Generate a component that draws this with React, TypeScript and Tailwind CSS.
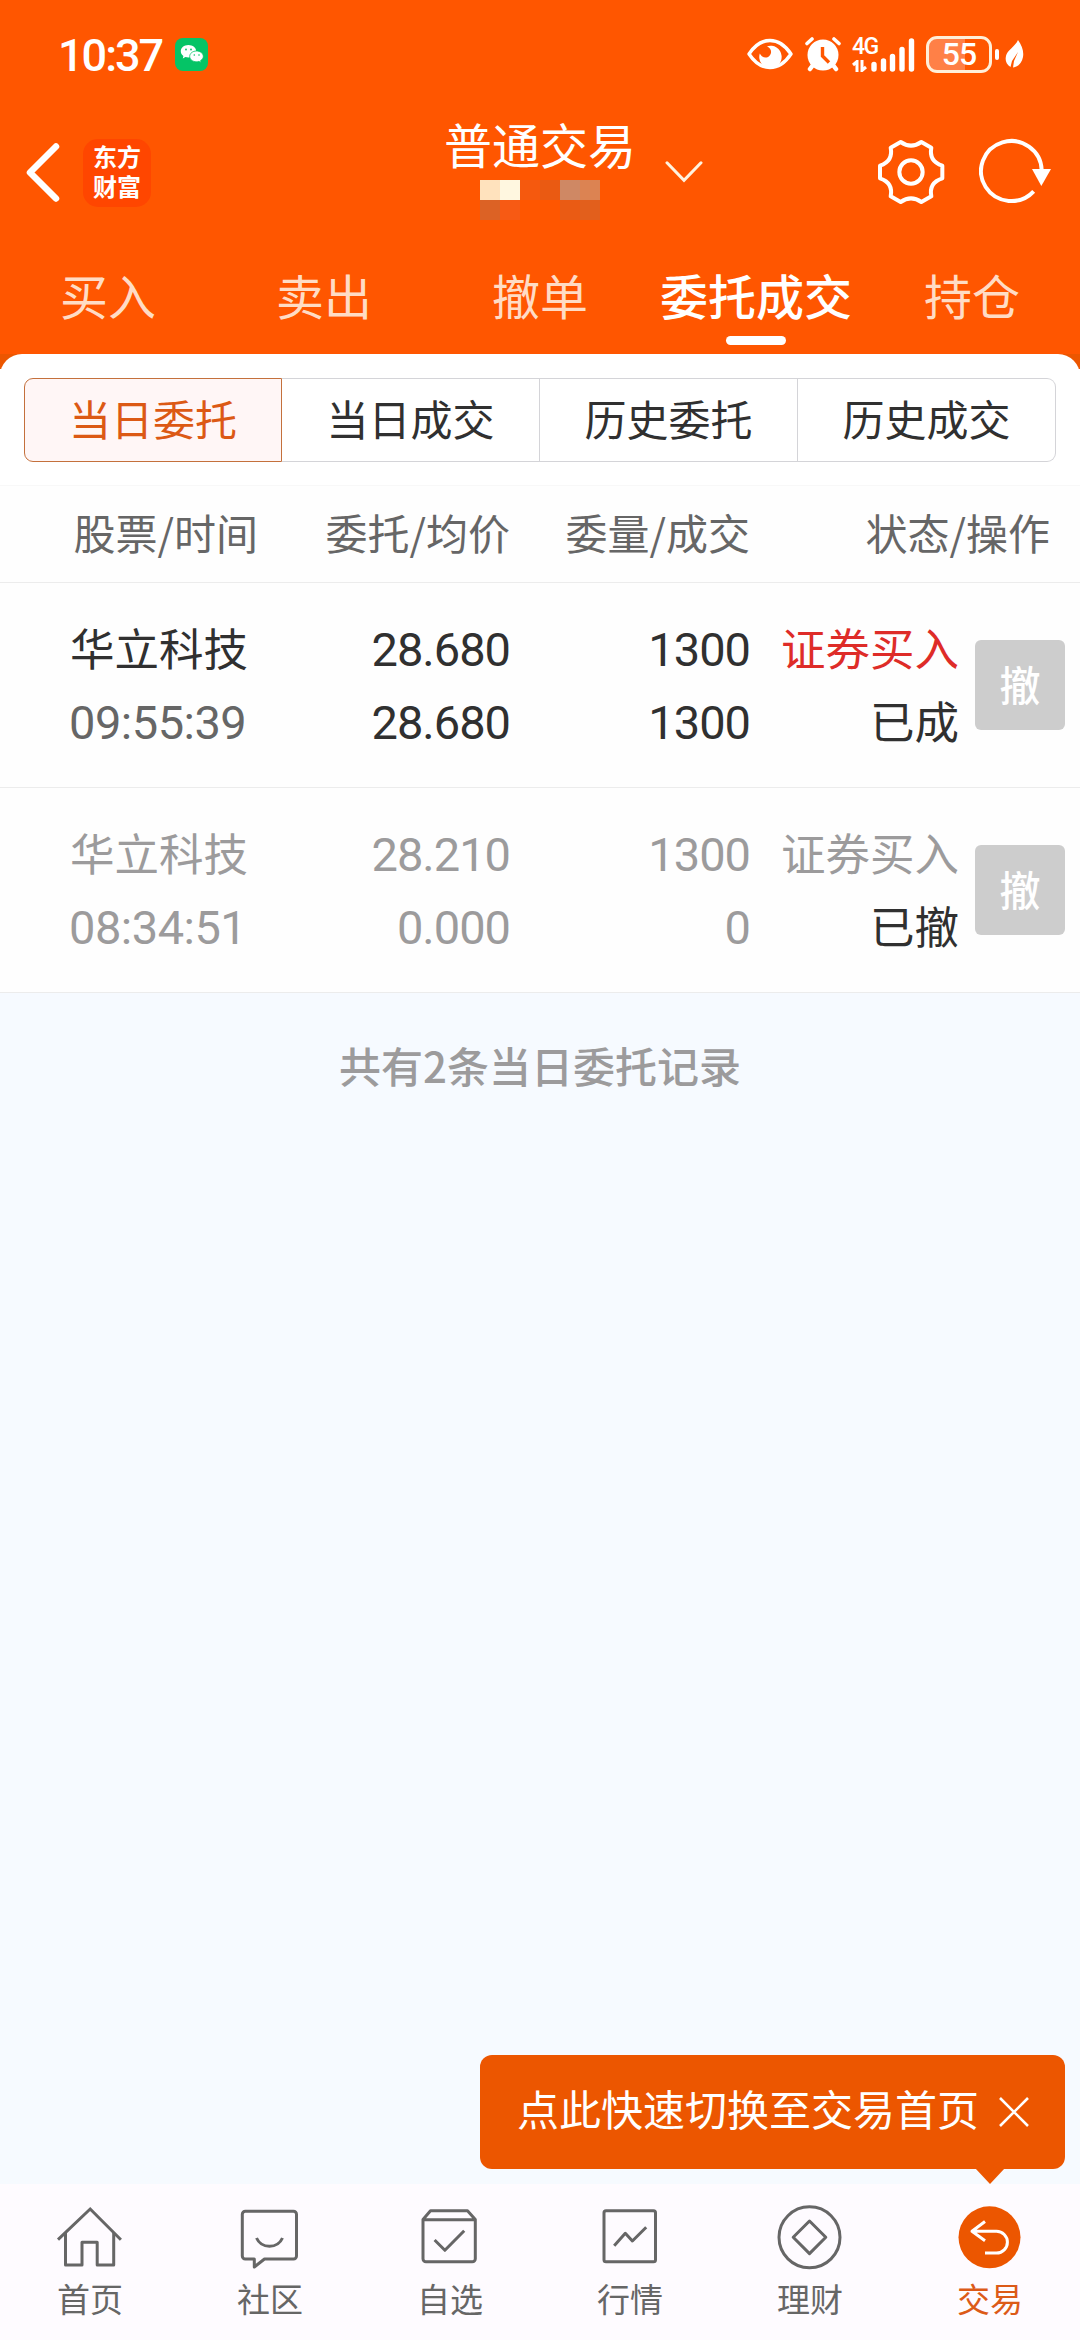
import type { ReactNode } from "react";

const NUM = "font-['Roboto','Noto_Sans_CJK_SC',sans-serif]";

const TABS = ["买入", "卖出", "撤单", "委托成交", "持仓"];
const ACTIVE_TAB = "委托成交";

const SEGMENTS = ["当日委托", "当日成交", "历史委托", "历史成交"];

type Order = {
  name: string;
  time: string;
  price: string;
  avg: string;
  qty: string;
  filled: string;
  side: string;
  status: string;
  canceled?: boolean;
};

const ORDERS: Order[] = [
  {
    name: "华立科技",
    time: "09:55:39",
    price: "28.680",
    avg: "28.680",
    qty: "1300",
    filled: "1300",
    side: "证券买入",
    status: "已成",
  },
  {
    name: "华立科技",
    time: "08:34:51",
    price: "28.210",
    avg: "0.000",
    qty: "1300",
    filled: "0",
    side: "证券买入",
    status: "已撤",
    canceled: true,
  },
];

// masked account number, one colour per block
const MASK = [
  "bg-[#ffe2bd]",
  "bg-[#fff7e0]",
  "bg-[#f5590e]",
  "bg-[#ea5a12]",
  "bg-[#cf8864]",
  "bg-[#dc8352]",
  "bg-[#dc6225]",
  "bg-[#f75a14]",
  "bg-transparent",
  "bg-transparent",
  "bg-[#ea5b14]",
  "bg-[#e25f1c]",
];

function StatusBar() {
  return (
    <div className="flex h-[108px] items-center pl-[58px] pr-[56px] text-white">
      <span className={`${NUM} w-[106px] whitespace-nowrap pt-[2px] text-[45px] leading-none font-medium tracking-[-2px]`}>
        10:37
      </span>
      <span className="ml-[11px] flex h-[33px] w-[33px] items-center justify-center rounded-lg bg-[#05c466]">
        <svg width="24" height="20" viewBox="0 0 24 20">
          <path d="M8.4 1C4 1 .8 3.800.8 7.300c0 2 1 3.700 2.600 4.800l-.6 2.300 2.600-1.300c1 .3 2 .4 3 .4 4.400 0 7.800-2.700 7.800-6.200S12.800 1 8.400 1z" fill="#fff" />
          <path d="M16.500 7c-3.800 0-6.800 2.400-6.800 5.400s3 5.400 6.800 5.400c.8 0 1.700-.1 2.400-.4l2.200 1.200-.5-2c1.600-1 2.700-2.500 2.700-4.200 0-3-3-5.400-6.800-5.400z" fill="#fff" stroke="#05c466" strokeWidth="0.800" />
          <g fill="#05c466">
            <circle cx="6" cy="5.500" r="0.900" />
            <circle cx="11" cy="5.500" r="0.900" />
            <circle cx="14.300" cy="11" r="0.800" />
            <circle cx="19" cy="11" r="0.800" />
          </g>
        </svg>
      </span>

      <div className="ml-auto flex items-center">
        {/* eye comfort */}
        <svg width="46" height="32" viewBox="0 0 46 32" fill="none">
          <path d="M2 16C8 7 15 2.500 23 2.500S38 7 44 16C38 25 31 29.500 23 29.500S8 25 2 16z" stroke="#fff" strokeWidth="3.400" strokeLinejoin="round" />
          <path d="M20 8.300a11.200 11.200 0 1 1-7.200 7.200c2 4 6.500 5.500 9.500 2.500s2.200-7.500-2.300-9.700z" fill="#fff" />
        </svg>
        {/* alarm */}
        <svg className="ml-[12px]" width="36" height="36" viewBox="0 0 36 36" fill="none" stroke="#fff" strokeLinecap="round">
          <circle cx="18" cy="19" r="15.500" fill="#fff" stroke="none" />
          <path d="M2 7.500L7 3M34 7.500L29 3" strokeWidth="3.600" />
          <path d="M8 29l-3 4M28 29l3 4" strokeWidth="4.500" />
          <path d="M17.500 11v9l6.500 6.500" stroke="#ff5600" strokeWidth="3.400" strokeLinecap="butt" />
        </svg>
        {/* mobile signal */}
        <div className="ml-[11px] flex h-[36px] items-end">
          <div className="flex h-[36px] w-[17px] flex-col justify-between pt-px">
            <span className={`${NUM} whitespace-nowrap text-[23px] leading-[20px] font-medium tracking-[-1.500px]`}>4G</span>
            <svg width="15" height="12" viewBox="0 0 15 12" fill="none" stroke="#fff" strokeWidth="3">
              <path d="M1 5l4-3.500V12M14 7l-4 3.500V0" />
            </svg>
          </div>
          <svg className="ml-[2px]" width="44" height="35" viewBox="0 0 44 35" fill="none" stroke="#fff" strokeWidth="5.400" strokeLinecap="round">
            <path d="M3 27.500v4.500M12.500 24v8M21.500 19.500v12.500M31 12.500v19.500M40.500 4v28" />
          </svg>
        </div>
        {/* battery */}
        <div className="ml-[11px] flex h-[37px] w-[66px] items-center justify-center rounded-[11px] border-[3px] border-[#ffefd9] bg-linear-to-r from-[#ff8047] from-60% to-transparent to-60%">
          <span className={`${NUM} text-[32px] leading-none font-medium tracking-[-1px]`}>55</span>
        </div>
        <span className="ml-[3px] h-[11px] w-[4px] rounded-sm bg-white" />
        <svg className="ml-[6px]" width="19" height="29" viewBox="0 0 19 29">
          <path d="M13 0c4 6 6 11 5 17-1 6-5 10-10 10.500l1-6.500 4-9-6 9-1.500 6C1 24 0 20 1 16 2 10 10 7 13 0z" fill="#fff" />
        </svg>
      </div>
    </div>
  );
}

function TitleBar() {
  return (
    <div className="flex h-[130px] items-center text-white">
      <svg className="ml-[24px] shrink-0" width="38" height="60" viewBox="0 0 38 60" fill="none" stroke="#fff" strokeWidth="6.500" strokeLinecap="round" strokeLinejoin="round">
        <path d="M32 3.500L6 29.500l26 26" />
      </svg>
      <div className="ml-[21px] flex h-[68px] w-[68px] shrink-0 items-center justify-center rounded-[15px] bg-[#ff4600] pb-[5px]">
        <span className="w-[50px] pl-px text-[24px] leading-[30px] font-bold break-all">东方财富</span>
      </div>

      <div className="ml-[293px] flex h-full w-[192px] shrink-0 flex-col items-center pt-[7px]">
        <span className="h-[65px] text-[48px] leading-[56px] whitespace-nowrap">普通交易</span>
        <div className="grid w-[120px] grid-cols-6">
          {MASK.map((color, i) => (
            <span key={i} className={`h-5 w-5 ${color}`} />
          ))}
        </div>
      </div>
      <svg className="mb-[3px] ml-[29px] shrink-0" width="38" height="22" viewBox="0 0 38 22" fill="none" stroke="#fff3df" strokeWidth="3" strokeLinecap="round">
        <path d="M2 1.800l17 17.500 17-17.500" />
      </svg>

      {/* settings */}
      <svg className="mb-[2px] ml-[174px] shrink-0" width="68" height="68" viewBox="469 414 204 204" fill="none" stroke="#fff" strokeWidth="12" strokeLinejoin="round">
        <path d="M540 426Q571 448 602 426L632 443Q624 484 665 497V535Q624 548 632 589L602 606Q571 584 540 606L510 589Q518 548 478 535V497Q518 484 510 443Z" />
        <circle cx="571" cy="516" r="35" />
      </svg>
      {/* refresh */}
      <svg className="mb-[2px] ml-[34px] shrink-0" width="74" height="68" viewBox="774 414 222 204" fill="none" stroke="#fff" strokeWidth="12">
        <path d="M962 510A91 90 0 1 0 938 574" />
        <path d="M933 507h57l-29 51z" fill="#fff" stroke="none" />
      </svg>
    </div>
  );
}

function Tabs() {
  return (
    <div className="grid h-[116px] grid-cols-5">
      {TABS.map((tab) => (
        <div key={tab} className="flex flex-col items-center pt-[24px]">
          <span
            className={`text-[48px] leading-[64px] whitespace-nowrap ${
              tab === ACTIVE_TAB ? "font-medium text-white" : "text-[#ffdcc5]"
            }`}
          >
            {tab}
          </span>
          {tab === ACTIVE_TAB && <span className="mt-[10px] h-[9px] w-[60px] rounded-full bg-white" />}
        </div>
      ))}
    </div>
  );
}

function Segments() {
  return (
    <div className="grid h-[84px] grid-cols-4 text-[42px] leading-none text-[#303030]">
      {SEGMENTS.map((label, i) => (
        <div
          key={label}
          className={`flex items-center justify-center pb-[4px] ${
            i === 0
              ? "rounded-l-[9px] border border-[#c4703c] bg-[#fff6f6] text-[#dc5914]"
              : "border-y border-r border-[#d4d4d8]"
          } ${i === SEGMENTS.length - 1 ? "rounded-r-[9px]" : ""}`}
        >
          {label}
        </div>
      ))}
    </div>
  );
}

function OrderRow({ order }: { order: Order }) {
  const tone = order.canceled ? "text-[#9c9b9c]" : "text-[#303030]";
  const line = "h-[73px] leading-[73px]";
  const digits = `${NUM} text-[47px]`;
  return (
    <div className="flex h-[205px] items-start border-b border-[#ececec] bg-[#fefefe] pt-[27px] whitespace-nowrap">
      <div className={`w-[210px] pl-[69px] text-[44.500px] ${tone}`}>
        <div className={`${line} pl-px`}>{order.name}</div>
        <div className={`${line} ${digits} pt-[3px] tracking-[-0.500px] ${order.canceled ? "" : "text-[#666]"}`}>
          {order.time}
        </div>
      </div>
      <div className={`w-[300px] pt-[3px] text-right tracking-[-1px] ${digits} ${tone}`}>
        <div className={line}>{order.price}</div>
        <div className={line}>{order.avg}</div>
      </div>
      <div className={`w-[240px] pt-[3px] text-right tracking-[-1px] ${digits} ${tone}`}>
        <div className={line}>{order.qty}</div>
        <div className={line}>{order.filled}</div>
      </div>
      <div className="w-[209px] text-right text-[44.500px] text-[#303030]">
        <div className={`${line} ${order.canceled ? "text-[#9c9b9c]" : "text-[#de2c28]"}`}>{order.side}</div>
        <div className={line}>{order.status}</div>
      </div>
      <button className="mt-[30px] ml-[16px] h-[90px] w-[90px] rounded-md bg-[#cdcdcd] pb-[4px] text-[41px] leading-none font-medium text-white">
        撤
      </button>
    </div>
  );
}

function NavIcon({ children }: { children: ReactNode }) {
  return (
    <svg width="72" height="66" viewBox="0 0 72 66" fill="none" stroke="#666" strokeWidth="3" strokeLinejoin="round">
      {children}
    </svg>
  );
}

const NAV = [
  {
    label: "首页",
    icon: (
      <>
        <path d="M4 35.700L36.200 5l30.700 30.700" strokeLinejoin="miter" />
        <path d="M11.500 29v32H28V38.300h15.200V61h16.500V29" />
      </>
    ),
  },
  {
    label: "社区",
    icon: (
      <>
        <path d="M11.500 7.300h48a3 3 0 0 1 3 3V52a3 3 0 0 1-3 3h-29l-10.200 8v-8h-9a3 3 0 0 1-3-3V10.300a3 3 0 0 1 3-3z" />
        <path d="M22.500 34c5 11 21 11 26 0" />
      </>
    ),
  },
  {
    label: "自选",
    icon: (
      <>
        <path d="M9 15.500l7.500-8.800h37l7.800 8.800v39.300a3 3 0 0 1-3 3H12a3 3 0 0 1-3-3zM9 15.700h52" />
        <path d="M20.600 36l10.300 10.300 19.300-19.600" />
      </>
    ),
  },
  {
    label: "行情",
    icon: (
      <>
        <rect x="10" y="6.700" width="51.500" height="51" rx="2" />
        <path d="M20.200 41.700l11.100-12.400 7.100 7.700 13.800-13.700" />
      </>
    ),
  },
  {
    label: "理财",
    icon: (
      <>
        <circle cx="35.500" cy="33.300" r="30.500" />
        <path d="M35.500 17l16.300 16.300-16.300 16.300-16.300-16.300z" />
      </>
    ),
  },
  {
    label: "交易",
    active: true,
    icon: (
      <>
        <circle cx="35.500" cy="33.300" r="31" fill="#ec5600" stroke="none" />
        <path d="M31 17.500L18 27.300l13 9.500M18 27.300h24.500a10.900 10.900 0 0 1 0 21.800H31" stroke="#fff" />
      </>
    ),
  },
];

function BottomNav() {
  return (
    <nav className="relative grid h-[156px] grid-cols-6 bg-[#fefbff]">
      {NAV.map((item) => (
        <div key={item.label} className="flex flex-col items-center pt-[20px]">
          <NavIcon>{item.icon}</NavIcon>
          <span
            className={`mt-[8px] text-[33px] leading-[40px] ${item.active ? "text-[#dc5a18]" : "text-[#666]"}`}
          >
            {item.label}
          </span>
        </div>
      ))}

      {/* hint over the last tab */}
      <div className="absolute right-[15px] bottom-[171px] flex h-[114px] w-[585px] items-center rounded-xl bg-[#ec5600] pl-[37px] text-white">
        <span className="pb-[9px] text-[42px] leading-none whitespace-nowrap">点此快速切换至交易首页</span>
        <svg className="ml-[20px]" width="30" height="30" viewBox="0 0 30 30" stroke="#fff" strokeWidth="2.600">
          <path d="M1 1l28 28M29 1L1 29" />
        </svg>
        <svg className="absolute top-[113px] right-[60px]" width="30" height="16" viewBox="0 0 30 16">
          <path d="M0 0h30L15 16z" fill="#ec5600" />
        </svg>
      </div>
    </nav>
  );
}

export default function App() {
  return (
    <div className="flex h-[2340px] w-[1080px] flex-col overflow-hidden bg-[#f6faff] font-['Noto_Sans_CJK_SC',sans-serif]">
      <header className="bg-[#ff5600]">
        <StatusBar />
        <TitleBar />
        <Tabs />
      </header>

      <main className="flex-1">
        <div className="bg-linear-to-b from-[#ec5600] from-[15px] to-white to-[15px]">
          <div className="h-[132px] rounded-t-[22px] border-b border-[#f8f8f8] bg-white px-[24px] pt-[24px]">
            <Segments />
          </div>
        </div>
        <div className="flex h-[97px] items-center border-b border-[#ececec] bg-[#fefefe] pb-[4px] text-[42px] leading-none whitespace-nowrap text-[#666]">
          <span className="w-[258px] text-right">股票/时间</span>
          <span className="w-[252px] text-right">委托/均价</span>
          <span className="w-[240px] text-right">委量/成交</span>
          <span className="w-[300px] text-right">状态/操作</span>
        </div>
        {ORDERS.map((order) => (
          <OrderRow key={order.time} order={order} />
        ))}
        <p className="mt-[44px] text-center text-[42px] leading-[56px] font-medium text-[#9c9b9c]">
          共有2条当日委托记录
        </p>
      </main>

      <BottomNav />
    </div>
  );
}
